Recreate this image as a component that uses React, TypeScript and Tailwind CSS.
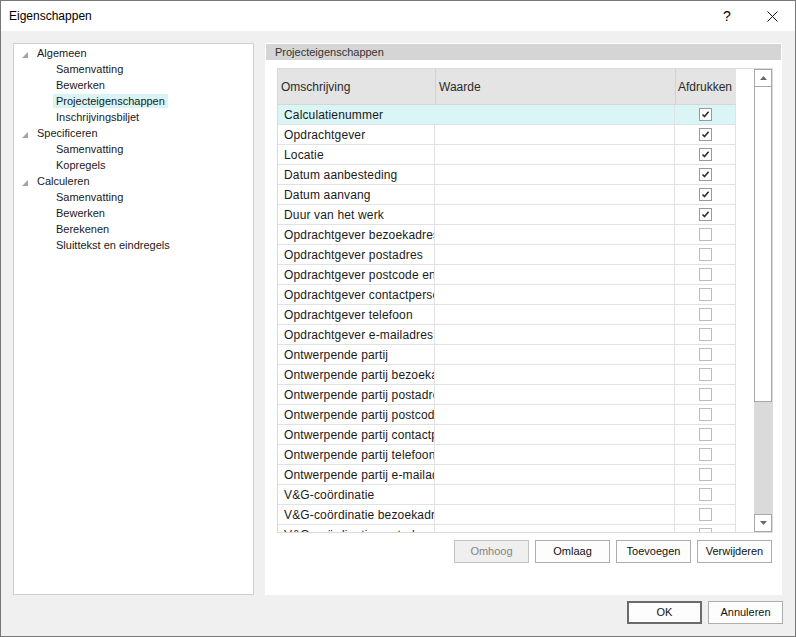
import React from "react";

const rows: { label: string; checked: boolean }[] = [
  { label: "Calculatienummer", checked: true },
  { label: "Opdrachtgever", checked: true },
  { label: "Locatie", checked: true },
  { label: "Datum aanbesteding", checked: true },
  { label: "Datum aanvang", checked: true },
  { label: "Duur van het werk", checked: true },
  { label: "Opdrachtgever bezoekadres", checked: false },
  { label: "Opdrachtgever postadres", checked: false },
  { label: "Opdrachtgever postcode en plaats", checked: false },
  { label: "Opdrachtgever contactpersoon", checked: false },
  { label: "Opdrachtgever telefoon", checked: false },
  { label: "Opdrachtgever e-mailadres", checked: false },
  { label: "Ontwerpende partij", checked: false },
  { label: "Ontwerpende partij bezoekadres", checked: false },
  { label: "Ontwerpende partij postadres", checked: false },
  { label: "Ontwerpende partij postcode en plaats", checked: false },
  { label: "Ontwerpende partij contactpersoon", checked: false },
  { label: "Ontwerpende partij telefoon", checked: false },
  { label: "Ontwerpende partij e-mailadres", checked: false },
  { label: "V&G-coördinatie", checked: false },
  { label: "V&G-coördinatie bezoekadres", checked: false },
  { label: "V&G-coördinatie postadres", checked: false },
];

const tree: { label: string; children: string[] }[] = [
  { label: "Algemeen", children: ["Samenvatting", "Bewerken", "Projecteigenschappen", "Inschrijvingsbiljet"] },
  { label: "Specificeren", children: ["Samenvatting", "Kopregels"] },
  { label: "Calculeren", children: ["Samenvatting", "Bewerken", "Berekenen", "Sluittekst en eindregels"] },
];

function Triangle() {
  return (
    <svg width="6" height="6" viewBox="0 0 6 6" className="block">
      <polygon points="6,0 6,6 0,6" fill="#a3a3a3" />
    </svg>
  );
}

function CheckBox({ checked }: { checked: boolean }) {
  return (
    <div
      className={
        checked
          ? "w-[13px] h-[13px] border border-[#9a9a9a] bg-white flex items-center justify-center"
          : "w-[13px] h-[13px] border border-[#bdbdbd] bg-white"
      }
    >
      {checked && (
        <svg width="11" height="11" viewBox="0 0 11 11" className="block">
          <path d="M2.5 5.5 L4.5 7.6 L8.6 2.8" stroke="#333333" strokeWidth="1.7" fill="none" />
        </svg>
      )}
    </div>
  );
}

function Btn({ label, disabled, primary, w }: { label: string; disabled?: boolean; primary?: boolean; w: string }) {
  let cls = "h-[23px] flex items-center justify-center text-[11px] ";
  if (disabled) cls += "border border-[#c2c2c2] bg-[#efefef] text-[#838383]";
  else if (primary) cls += "border-2 border-[#6b6b6b] bg-[#fdfdfd] text-[#111]";
  else cls += "border border-[#adadad] bg-[#fdfdfd] text-[#111]";
  return <div className={cls + " " + w}>{label}</div>;
}

export default function App() {
  return (
    <div
      className="w-[796px] h-[637px] border border-[#777777] flex flex-col bg-[#f0f0f0] overflow-hidden"
      style={{ fontFamily: '"Liberation Sans", Arial, sans-serif' }}
    >
      {/* Title bar */}
      <div className="h-[30px] bg-white flex items-center shrink-0">
        <div className="pl-[8px] text-[12px] text-black flex-1">Eigenschappen</div>
        <div className="w-[46px] flex items-center justify-center text-[14px] text-black pl-[2px]">?</div>
        <div className="w-[46px] flex items-center justify-center">
          <svg width="11" height="11" viewBox="0 0 11 11" className="block">
            <path d="M0.5 0.5 L10.5 10.5 M10.5 0.5 L0.5 10.5" stroke="#111" strokeWidth="1" />
          </svg>
        </div>
      </div>

      {/* Body */}
      <div className="flex pt-[12px] pl-[12px] pr-[13px] gap-[11px] h-[564px] shrink-0">
        {/* Tree */}
        <div className="w-[241px] h-[552px] border border-[#d0d0d0] bg-white pt-[1px] text-[11px] text-[#1a1a1a]">
          {tree.map((g, gi) => (
            <div key={gi}>
              <div className="h-[16px] flex items-center">
                <div className="w-[8px]" />
                <div className="mt-[4px]">
                  <Triangle />
                </div>
                <div className="pl-[9px]">{g.label}</div>
              </div>
              {g.children.map((c, ci) => {
                const sel = gi === 0 && ci === 2;
                return (
                  <div key={ci} className="h-[16px] flex items-center">
                    <div
                      className={
                        sel
                          ? "ml-[39px] px-[3px] h-[14px] flex items-center bg-[#d9f4f4]"
                          : "ml-[39px] px-[3px] h-[14px] flex items-center"
                      }
                    >
                      {c}
                    </div>
                  </div>
                );
              })}
            </div>
          ))}
        </div>

        {/* Right panel */}
        <div className="w-[517px] h-[552px] bg-white p-[1px] flex flex-col">
          <div className="h-[16px] bg-[#d5d5d5] flex items-center pl-[9px] text-[11px] text-[#333]">
            Projecteigenschappen
          </div>
          <div className="pl-[11px] pt-[8px]">
            <div className="w-[496px] h-[465px] border border-[#dadada] flex">
              {/* table */}
              <div className="w-[458px] h-full overflow-hidden text-[12px]">
                <div className="h-[36px] flex bg-[#e4e4e4] border-b border-[#d6d6d6] text-[#2a2a2a]">
                  <div className="w-[158px] pl-[3px] flex items-center border-r border-[#d2d2d2]">Omschrijving</div>
                  <div className="w-[240px] pl-[3px] flex items-center border-r border-[#d2d2d2]">Waarde</div>
                  <div className="w-[60px] pl-[2px] flex items-center">Afdrukken</div>
                </div>
                {rows.map((r, i) => (
                  <div
                    key={i}
                    className={
                      i === 0
                        ? "h-[20px] flex bg-[#d9f5f5] border-b border-[#e2e2e2] text-[#1a1a1a]"
                        : "h-[20px] flex bg-white border-b border-[#e2e2e2] text-[#1a1a1a]"
                    }
                  >
                    <div
                      className={
                        i === 0
                          ? "w-[157px] pl-[6px] flex items-center whitespace-nowrap overflow-hidden tracking-[0.15px] border-r border-transparent"
                          : "w-[157px] pl-[6px] flex items-center whitespace-nowrap overflow-hidden tracking-[0.15px] border-r border-[#e2e2e2]"
                      }
                    >
                      {r.label}
                    </div>
                    <div className="w-[240px] border-r border-[#e2e2e2]" />
                    <div className="w-[61px] flex items-center justify-center border-r border-[#e2e2e2]">
                      <CheckBox checked={r.checked} />
                    </div>
                  </div>
                ))}
              </div>
              <div className="w-[18px] h-full bg-white" />
              {/* scrollbar */}
              <div className="w-[18px] h-full flex flex-col">
                <div className="h-[18px] border border-[#a8a8a8] bg-white flex items-center justify-center">
                  <svg width="7" height="4" viewBox="0 0 7 4" className="block">
                    <polygon points="0,4 7,4 3.5,0" fill="#6a6a6a" />
                  </svg>
                </div>
                <div className="h-[315px] border border-t-0 border-[#a8a8a8] bg-white" />
                <div className="flex-1 bg-[#dadada]" />
                <div className="h-[18px] border border-[#a8a8a8] bg-white flex items-center justify-center">
                  <svg width="7" height="4" viewBox="0 0 7 4" className="block">
                    <polygon points="0,0 7,0 3.5,4" fill="#6a6a6a" />
                  </svg>
                </div>
              </div>
            </div>
            <div className="w-[496px] flex justify-end gap-[6px] pt-[7px] pr-[1px]">
              <Btn label="Omhoog" disabled w="w-[75px]" />
              <Btn label="Omlaag" w="w-[75px]" />
              <Btn label="Toevoegen" w="w-[75px]" />
              <Btn label="Verwijderen" w="w-[75px]" />
            </div>
          </div>
        </div>
      </div>

      {/* Bottom buttons */}
      <div className="flex justify-end gap-[6px] pt-[6px] pr-[12px]">
        <Btn label="OK" primary w="w-[75px]" />
        <Btn label="Annuleren" w="w-[75px]" />
      </div>
    </div>
  );
}
